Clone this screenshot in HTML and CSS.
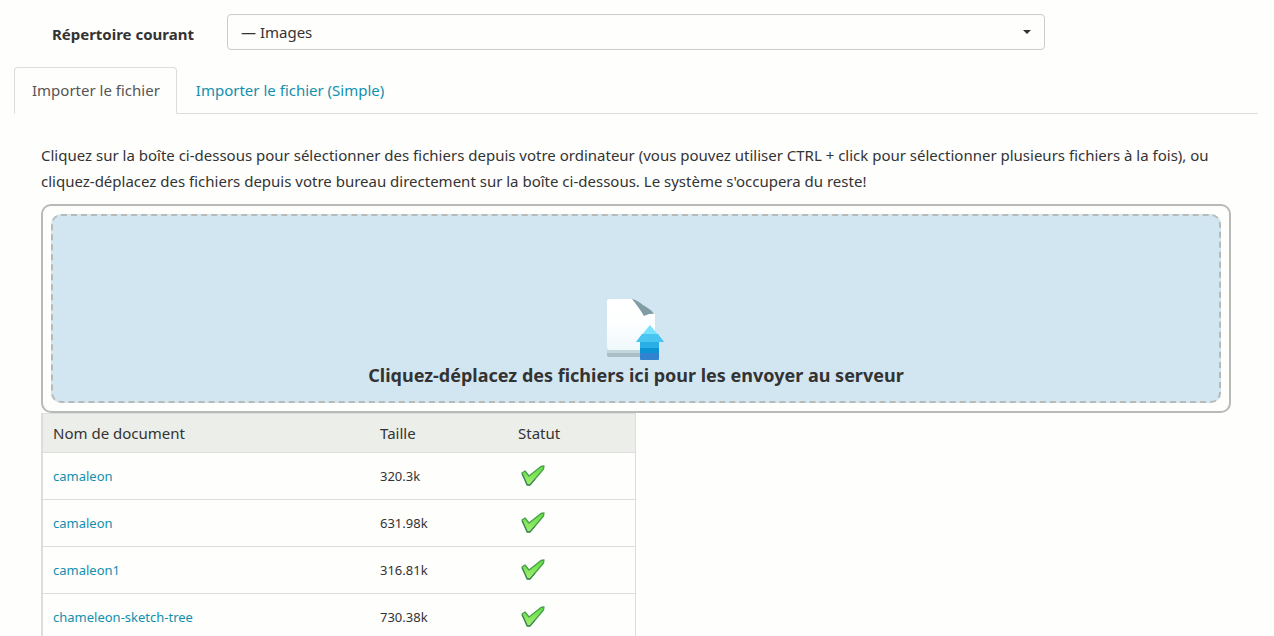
FILE: index.html
```html
<!DOCTYPE html>
<html lang="fr">
<head>
<meta charset="utf-8">
<title>Importer le fichier</title>
<link rel="stylesheet" href="styles.css">
</head>
<body>
<svg class="sprite" aria-hidden="true">
  <defs>
    <linearGradient id="tick" x1="0" y1="0" x2="0" y2="1"><stop offset="0" stop-color="#5fe03c"/><stop offset="1" stop-color="#a4ec74"/></linearGradient>
    <symbol id="check" viewBox="0 0 24 22">
      <path d="M1 8 L4 6 L8 11 L20 1.5 L23 1 L22.5 4 L9 20 L6 20 Z" fill="url(#tick)" stroke="#4a9f50" stroke-width="1.3" stroke-linejoin="round"/>
      <path d="M1 9 L6.5 20 L9 20 L14 14" fill="none" stroke="#39785a" stroke-width="1"/>
    </symbol>
  </defs>
</svg>
<form class="folder">
  <label class="folder-label" for="dir">Répertoire courant</label>
  <div class="picker">
    <select class="picker-select" id="dir"><option>— Images</option></select>
    <span class="caret"></span>
  </div>
</form>
<nav class="tabs">
  <a class="tab active" href="#file">Importer le fichier</a>
  <a class="tab" href="#simple">Importer le fichier (Simple)</a>
</nav>
<main class="panel" id="file">
  <p class="help">Cliquez sur la boîte ci-dessous pour sélectionner des fichiers depuis votre ordinateur (vous pouvez utiliser CTRL + click pour sélectionner plusieurs fichiers à la fois), ou cliquez-déplacez des fichiers depuis votre bureau directement sur la boîte ci-dessous. Le système s'occupera du reste!</p>
  <div class="drop-frame">
    <button class="drop" type="button">
      <svg class="drop-icon" width="64" height="64" viewBox="0 0 64 64" aria-hidden="true">
        <defs><linearGradient id="sheet" x1="0" y1="0" x2="0" y2="1"><stop offset="0" stop-color="#fff"/><stop offset=".5" stop-color="#fdfeff"/><stop offset="1" stop-color="#eff8fb"/></linearGradient></defs>
        <path d="M4 52H51V60Q51 61 50 61H5Q3 61 3 59V52Z" fill="#a9bfc6"/>
        <path d="M3 50H51V57H3Z" fill="#c3d6dd"/>
        <path d="M5 3H28L51 18V53Q51 54 50 54H5Q3 54 3 52V5Q3 3 5 3Z" fill="url(#sheet)"/>
        <path d="M28 3Q33 4 39 9Q48 14 50 18Q46 17 40 20Q36 13 28 3Z" fill="#819da4"/>
        <path d="M46 29L60 46H32Z" fill="#74e2ff"/>
        <path d="M38 38H54L60 46H32Z" fill="#48c5f0"/>
        <path d="M36 46H55V52H36Z" fill="#29aee5"/>
        <path d="M36 52H55V57H36Z" fill="#0d94d5"/>
        <path d="M36 57H55V63Q55 64 54 64H37Q36 64 36 63Z" fill="#3183cf"/>
      </svg>
      <span class="drop-text">Cliquez-déplacez des fichiers ici pour les envoyer au serveur</span>
    </button>
  </div>
  <table class="files">
    <thead><tr><th class="name">Nom de document</th><th class="size">Taille</th><th>Statut</th></tr></thead>
    <tbody>
      <tr><td><a href="#f1">camaleon</a></td><td>320.3k</td><td><svg class="check" role="img" aria-label="OK"><use href="#check"/></svg></td></tr>
      <tr><td><a href="#f2">camaleon</a></td><td>631.98k</td><td><svg class="check" role="img" aria-label="OK"><use href="#check"/></svg></td></tr>
      <tr><td><a href="#f3">camaleon1</a></td><td>316.81k</td><td><svg class="check" role="img" aria-label="OK"><use href="#check"/></svg></td></tr>
      <tr><td><a href="#f4">chameleon-sketch-tree</a></td><td>730.38k</td><td><svg class="check" role="img" aria-label="OK"><use href="#check"/></svg></td></tr>
    </tbody>
  </table>
</main>
</body>
</html>
```
FILE: styles.css
```css
* { box-sizing: border-box; }
html { scrollbar-width: none; }
body {
  margin: 0;
  padding: 14px 16px 0 14px;
  background: #fefefd;
  color: #333;
  font: 15px/26px "Noto Sans", "Open Sans", sans-serif;
}
a { color: #1290ac; text-decoration: none; }
.sprite { position: absolute; width: 0; height: 0; }
.folder { display: grid; grid-template-columns: 180px 818px 1fr; column-gap: 33px; }
.folder-label { padding-top: 7px; text-align: right; font-weight: bold; }
.picker { position: relative; }
.picker-select {
  display: block;
  width: 100%;
  height: 36px;
  padding: 0 13px;
  appearance: none;
  border: 1px solid #ccc;
  border-radius: 4px;
  background: #fefefd;
  color: #333;
  font: inherit;
}
.caret {
  position: absolute;
  top: 16px;
  right: 14px;
  border: 4px solid transparent;
  border-top-color: #333;
  border-bottom: 0;
  pointer-events: none;
}
.tabs { display: flex; gap: 2px; margin-top: 17px; border-bottom: 1px solid #ddd; }
.tab { margin-bottom: -1px; padding: 9px 16px 10px; border: 1px solid transparent; border-radius: 4px 4px 0 0; }
.tab.active { padding-left: 17px; border-color: #ddd; border-bottom-color: #fefefd; background: #fefefd; color: #555; }
.panel { padding: 28px 27px 0; }
.help { margin: 0 0 10px; }
.drop-frame { padding: 8px; border: 2px solid #b8bab7; border-radius: 10px; }
.drop {
  display: flex;
  flex-direction: column;
  align-items: center;
  justify-content: flex-end;
  gap: 2px;
  width: 100%;
  height: 189px;
  padding: 0 0 13px;
  border: 2px dashed #b8bab7;
  border-radius: 10px;
  background: #d2e6f1;
  color: #333;
  font: bold 18px/26px "Noto Sans", "Open Sans", sans-serif;
}
.files {
  width: 50%;
  border-collapse: separate;
  border-spacing: 0;
  border: 1px solid #ddd;
  border-left-width: 2px;
  table-layout: fixed;
  font-size: 13px;
  line-height: 20px;
}
.files th { height: 38px; padding: 0 10px; background: #eceeea; text-align: left; font-size: 15px; font-weight: normal; }
.files td { height: 47px; padding: 0 10px; border-top: 1px solid #ddd; }
.files .name { width: 327px; }
.files .size { width: 138px; }
.check { display: block; width: 24px; height: 22px; margin-left: 3px; }
```
